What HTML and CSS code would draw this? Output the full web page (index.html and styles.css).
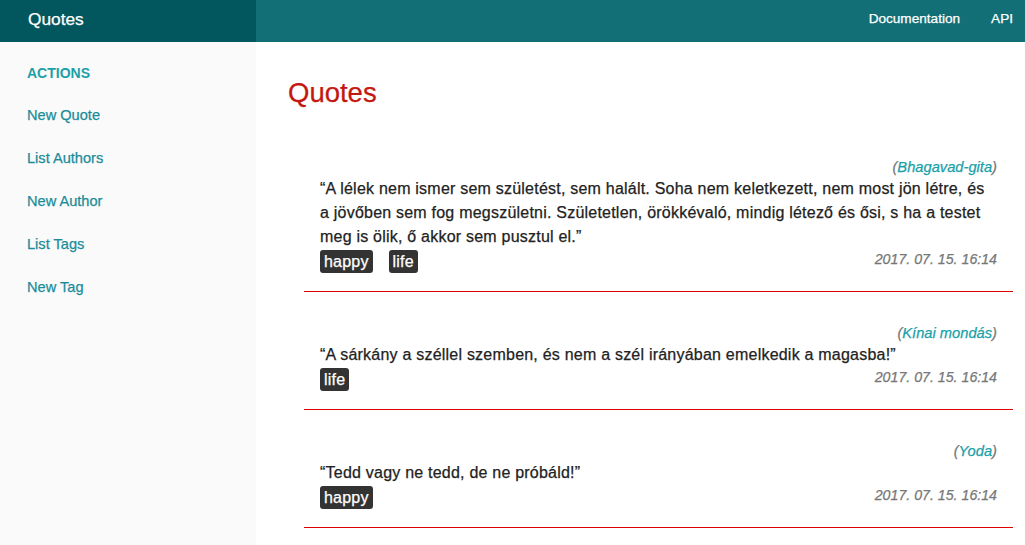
FILE: index.html
```html
<!DOCTYPE html>
<html lang="hu">
<head>
<meta charset="utf-8">
<title>Quotes</title>
<link rel="stylesheet" href="styles.css">
</head>
<body>
<header class="topbar">
  <div class="brand">Quotes</div>
  <nav class="topnav">
    <a href="#">Documentation</a>
    <a href="#">API</a>
  </nav>
</header>
<div class="layout">
  <aside class="sidebar">
    <div class="side-title">ACTIONS</div>
    <a class="side-link" href="#">New Quote</a>
    <a class="side-link" href="#">List Authors</a>
    <a class="side-link" href="#">New Author</a>
    <a class="side-link" href="#">List Tags</a>
    <a class="side-link" href="#">New Tag</a>
  </aside>
  <main class="main">
    <h1 class="page-title">Quotes</h1>
    <div class="quotes">
      <div class="quote">
        <div class="author">(<a href="#">Bhagavad-gita</a>)</div>
        <div class="text">“A lélek nem ismer sem születést, sem halált. Soha nem keletkezett, nem most jön létre, és a jövőben sem fog megszületni. Születetlen, örökkévaló, mindig létező és ősi, s ha a testet meg is ölik, ő akkor sem pusztul el.”</div>
        <div class="meta">
          <div class="tags"><span class="tag">happy</span><span class="tag">life</span></div>
          <div class="date">2017. 07. 15. 16:14</div>
        </div>
      </div>
      <div class="quote">
        <div class="author">(<a href="#">Kínai mondás</a>)</div>
        <div class="text">“A sárkány a széllel szemben, és nem a szél irányában emelkedik a magasba!”</div>
        <div class="meta">
          <div class="tags"><span class="tag">life</span></div>
          <div class="date">2017. 07. 15. 16:14</div>
        </div>
      </div>
      <div class="quote">
        <div class="author">(<a href="#">Yoda</a>)</div>
        <div class="text">“Tedd vagy ne tedd, de ne próbáld!”</div>
        <div class="meta">
          <div class="tags"><span class="tag">happy</span></div>
          <div class="date">2017. 07. 15. 16:14</div>
        </div>
      </div>
    </div>
  </main>
</div>
</body>
</html>
```
FILE: styles.css
```css
* { box-sizing: border-box; }
html, body { margin: 0; padding: 0; }
body {
  font-family: "Liberation Sans", Arial, sans-serif;
  background: #ffffff;
  color: #222;
  overflow: hidden;
  -webkit-text-stroke: 0.25px currentColor;
}
a { text-decoration: none; }

.topbar {
  display: flex;
  height: 42px;
  background: #136f76;
  color: #fff;
}
.brand {
  width: 256px;
  background: #02575f;
  padding: 9px 0 0 28px;
  font-size: 17.3px;
  line-height: 20px;
}
.topnav {
  flex: 1;
  display: flex;
  justify-content: flex-end;
  gap: 31px;
  padding: 10px 12px 0 0;
}
.topnav a {
  color: #fff;
  font-size: 13.6px;
  line-height: 17px;
}

.layout {
  display: flex;
  min-height: 503px;
}
.sidebar {
  width: 256px;
  flex-shrink: 0;
  background: #fafafa;
  padding: 22px 0 0 27px;
  display: flex;
  flex-direction: column;
}
.side-title {
  color: #1aa0a8;
  font-weight: bold;
  font-size: 14px;
  line-height: 18px;
  margin-bottom: 24px;
  -webkit-text-stroke: 0;
}
.side-link {
  color: #1a8c99;
  font-size: 14.6px;
  line-height: 18px;
  margin-bottom: 25px;
}

.main {
  flex: 1;
  padding: 36px 12px 0 32px;
}
.page-title {
  margin: 0;
  color: #c4170f;
  font-size: 27.5px;
  font-weight: normal;
  line-height: 30px;
}
.quotes {
  margin-left: 16px;
  margin-top: 18px;
}
.quote {
  padding: 31px 16px 18px;
  border-bottom: 1px solid #dd0000;
}
.author {
  text-align: right;
  font-style: italic;
  font-size: 14.7px;
  line-height: 20px;
  color: #777;
}
.author a { color: #1aa0a8; }
.text {
  font-size: 16px;
  line-height: 24px;
  color: #222;
  letter-spacing: 0.22px;
}
.meta {
  display: flex;
  justify-content: space-between;
  align-items: center;
  height: 24px;
}
.tags {
  display: flex;
  gap: 16px;
  margin-top: 1px;
}
.tag {
  background: #333;
  color: #fff;
  border-radius: 3px;
  padding: 0 4px;
  font-size: 16px;
  line-height: 23px;
  letter-spacing: 0.2px;
}
.date {
  font-style: italic;
  font-size: 14.2px;
  color: #777;
  line-height: 20px;
  margin-top: -4px;
}
```
